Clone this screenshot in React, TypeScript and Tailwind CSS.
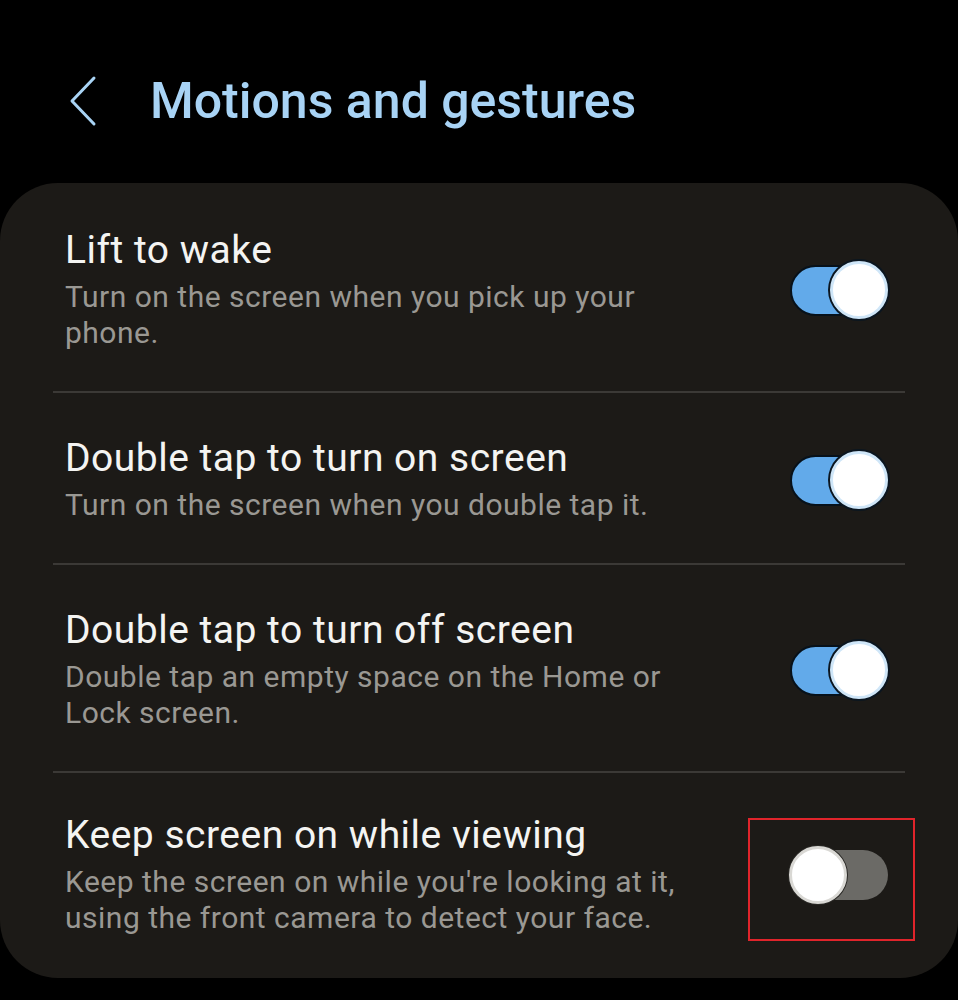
import React from "react";

type Setting = {
    title: string;
    description: string;
    enabled: boolean;
    highlighted?: boolean;
};

const settings: Setting[] = [
    {
        title: "Lift to wake",
        description: "Turn on the screen when you pick up your phone.",
        enabled: true,
    },
    {
        title: "Double tap to turn on screen",
        description: "Turn on the screen when you double tap it.",
        enabled: true,
    },
    {
        title: "Double tap to turn off screen",
        description: "Double tap an empty space on the Home or Lock screen.",
        enabled: true,
    },
    {
        title: "Keep screen on while viewing",
        description: "Keep the screen on while you're looking at it, using the front camera to detect your face.",
        enabled: false,
        highlighted: true,
    },
];

function Toggle({ on }: { on: boolean }) {
    return (
        <div className="relative h-[58px] w-[99px]">
            {on ? (
                <>
                    <div className="absolute left-[1px] top-[4px] h-[51px] w-[92px] rounded-full border-2 border-[#07111a] bg-[#62aaea]" />
                    <div className="absolute right-0 top-0 h-[58px] w-[58px] rounded-full border-[3px] border-[#cfe6f8] bg-white shadow-[0_0_0_2px_#0b1620]" />
                </>
            ) : (
                <>
                    <div className="absolute right-0 top-[4px] h-[50px] w-[88px] rounded-full bg-[#6b6a66]" />
                    <div className="absolute left-0 top-0 h-[58px] w-[58px] rounded-full border-[3px] border-[#d9d8d4] bg-white shadow-[0_0_0_1px_#2a2926]" />
                </>
            )}
        </div>
    );
}

export default function App() {
    return (
        <div className="h-[1000px] w-[958px] bg-black pt-[71px] font-['Roboto',sans-serif]">
            {/* Header */}
            <header className="flex h-[60px] items-center">
                <svg className="ml-[68px] h-[52px] w-[30px]" viewBox="0 0 30 52" fill="none">
                    <path d="M26 3 L4 26 L26 49" stroke="#a9d4f5" strokeWidth="3" strokeLinecap="round" strokeLinejoin="round" />
                </svg>
                <h1 className="ml-[52px] text-[50px] leading-[60px] font-medium text-[#a8d3f5]">
                    Motions and gestures
                </h1>
            </header>

            {/* Settings card */}
            <main className="mt-[52px] rounded-[58px] bg-[#1c1a17] pt-[2px]">
                {settings.map((item, i) => (
                    <div key={item.title}>
                        {i > 0 && <div className="ml-[53px] mr-[53px] h-[2px] bg-[#3b3936]" />}
                        <div
                            className={
                                i === settings.length - 1
                                    ? "flex items-center pb-[42px] pl-[65px] pr-[70px] pt-[40px]"
                                    : "flex items-center pb-[40px] pl-[65px] pr-[70px] pt-[43px]"
                            }
                        >
                            <div className="flex-1 pr-[88px]">
                                <div className="text-[39px] leading-[44px] tracking-[0.5px] text-[#f4f4f2]">{item.title}</div>
                                <div className="mt-[7px] text-[30px] leading-[36px] tracking-[0.5px] text-[#9a9893]">
                                    {item.description}
                                </div>
                            </div>
                            <div className="relative">
                                <Toggle on={item.enabled} />
                                {item.highlighted && (
                                    <div className="absolute -bottom-[37px] -left-[41px] -right-[27px] -top-[28px] border-2 border-[#e0242b]" />
                                )}
                            </div>
                        </div>
                    </div>
                ))}
            </main>
        </div>
    );
}
